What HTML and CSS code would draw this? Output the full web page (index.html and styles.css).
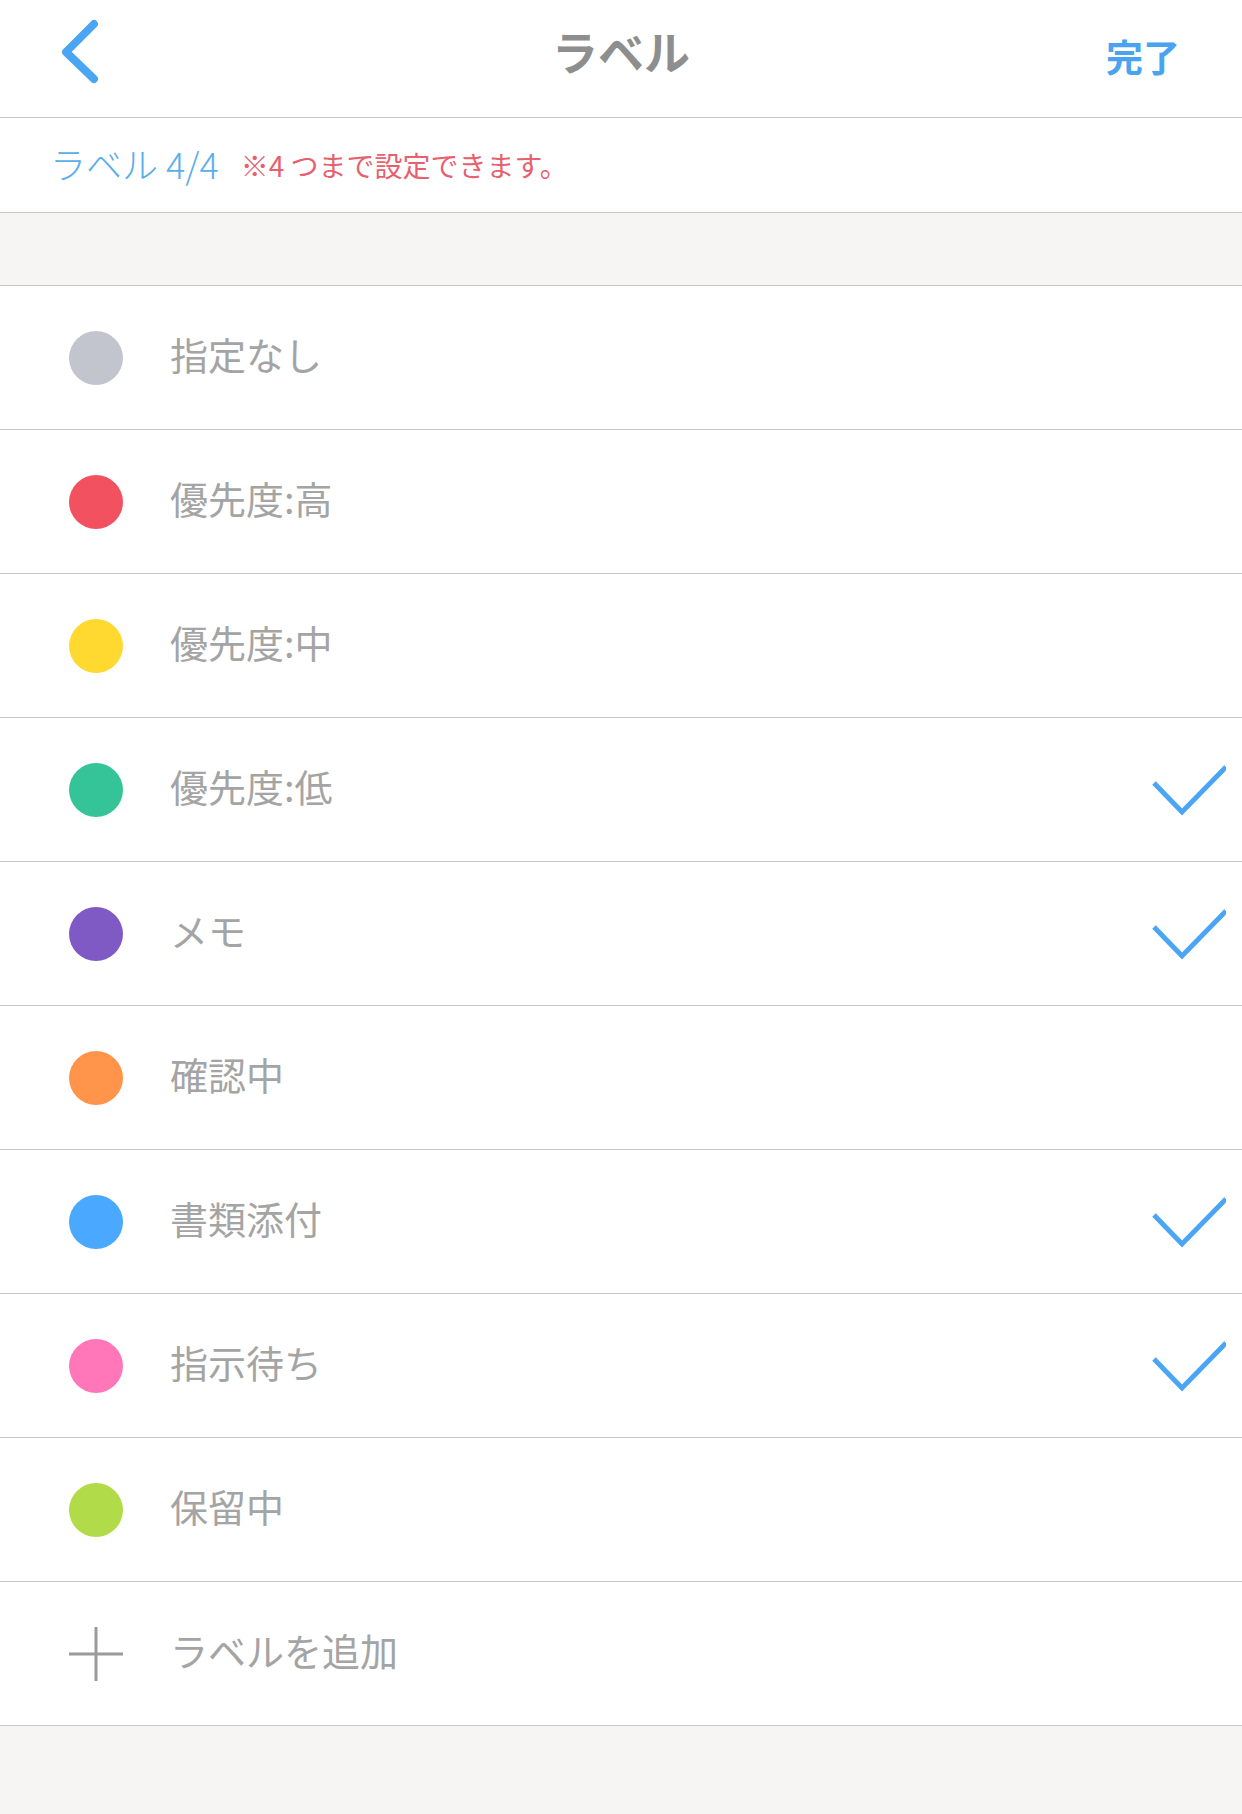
FILE: index.html
```html
<!DOCTYPE html>
<html lang="ja">
<head>
<meta charset="utf-8">
<title>ラベル</title>
<link rel="stylesheet" href="styles.css">
</head>
<body>
<div class="screen">
  <header class="nav">
    <div class="nav-left">
      <svg class="back" width="60" height="100" viewBox="40 0 60 100"><polyline points="94,24 66,52 94,79" fill="none" stroke="#4aa6f2" stroke-width="8" stroke-linecap="round" stroke-linejoin="round"/></svg>
    </div>
    <div class="nav-title">ラベル</div>
    <div class="nav-right">完了</div>
  </header>
  <div class="info">
    <span class="count">ラベル 4/4</span>
    <span class="note">※4 つまで設定できます。</span>
  </div>
  <div class="spacer"></div>
  <ul class="list">
    <li class="row"><span class="dot c-none"></span><span class="label">指定なし</span></li>
    <li class="row"><span class="dot c-red"></span><span class="label">優先度:高</span></li>
    <li class="row"><span class="dot c-yellow"></span><span class="label">優先度:中</span></li>
    <li class="row"><span class="dot c-green"></span><span class="label">優先度:低</span>
      <svg class="check" width="80" height="54" viewBox="0 0 80 54"><polyline points="8,18 36,47 80,2" fill="none" stroke="#4aa6f2" stroke-width="5"/></svg></li>
    <li class="row"><span class="dot c-purple"></span><span class="label">メモ</span>
      <svg class="check" width="80" height="54" viewBox="0 0 80 54"><polyline points="8,18 36,47 80,2" fill="none" stroke="#4aa6f2" stroke-width="5"/></svg></li>
    <li class="row"><span class="dot c-orange"></span><span class="label">確認中</span></li>
    <li class="row"><span class="dot c-blue"></span><span class="label">書類添付</span>
      <svg class="check" width="80" height="54" viewBox="0 0 80 54"><polyline points="8,18 36,47 80,2" fill="none" stroke="#4aa6f2" stroke-width="5"/></svg></li>
    <li class="row"><span class="dot c-pink"></span><span class="label">指示待ち</span>
      <svg class="check" width="80" height="54" viewBox="0 0 80 54"><polyline points="8,18 36,47 80,2" fill="none" stroke="#4aa6f2" stroke-width="5"/></svg></li>
    <li class="row"><span class="dot c-lime"></span><span class="label">保留中</span></li>
    <li class="row"><svg class="plus" width="54" height="54" viewBox="0 0 54 54"><line x1="0" y1="27" x2="54" y2="27" stroke="#9a9a9a" stroke-width="3"/><line x1="27" y1="0" x2="27" y2="54" stroke="#9a9a9a" stroke-width="3"/></svg><span class="label">ラベルを追加</span></li>
  </ul>
</div>
</body>
</html>
```
FILE: styles.css
```css
* { box-sizing: border-box; }
html, body { margin: 0; padding: 0; }
body {
  width: 1242px;
  height: 1814px;
  background: #f6f5f4;
  font-family: "Noto Sans CJK JP", "Noto Sans", sans-serif;
  overflow: hidden;
}
.screen { width: 1242px; }
.nav {
  height: 118px;
  background: #fff;
  border-bottom: 1px solid #c6c6c6;
  display: grid;
  grid-template-columns: 1fr auto 1fr;
  align-items: center;
  padding-bottom: 22px;
}
.nav-left { display: flex; align-items: center; }
.back { display: block; margin-left: 40px; }
.nav-title {
  font-size: 46px;
  font-weight: 700;
  color: #8e8e8e;
  line-height: 1;
}
.nav-right {
  justify-self: end;
  font-size: 37px;
  font-weight: 700;
  color: #4aa3ef;
  margin-right: 62px;
  margin-top: 12px;
  line-height: 1;
}
.info {
  height: 95px;
  background: #fff;
  border-bottom: 1px solid #c6c6c6;
  display: flex;
  align-items: center;
  padding-left: 50px;
  padding-bottom: 5px;
}
.count {
  font-size: 36px;
  color: #5aaee9;
  font-weight: 300;
}
.note {
  font-size: 28px;
  color: #e8606e;
  margin-left: 22px;
  padding-top: 4px;
}
.spacer {
  height: 73px;
  background: #f6f5f4;
  border-bottom: 1px solid #c6c6c6;
}
.list { list-style: none; margin: 0; padding: 0; background: #fff; }
.row {
  height: 144px;
  border-bottom: 1px solid #c6c6c6;
  display: flex;
  align-items: center;
  padding-left: 69px;
  padding-right: 16px;
}
.dot {
  width: 54px;
  height: 54px;
  border-radius: 50%;
  flex: none;
}
.plus { display: block; flex: none; }
.label {
  margin-left: 47px;
  font-size: 38px;
  color: #a4a4a4;
  flex: 1;
  line-height: 1;
  padding-bottom: 8px;
}
.check { display: block; flex: none; margin-top: 4px; }
.c-none { background: #c3c5ce; }
.c-red { background: #f2515f; }
.c-yellow { background: #ffd930; }
.c-green { background: #35c497; }
.c-purple { background: #7f5ac5; }
.c-orange { background: #ff944a; }
.c-blue { background: #4aa9ff; }
.c-pink { background: #ff77b9; }
.c-lime { background: #b1db48; }
```
